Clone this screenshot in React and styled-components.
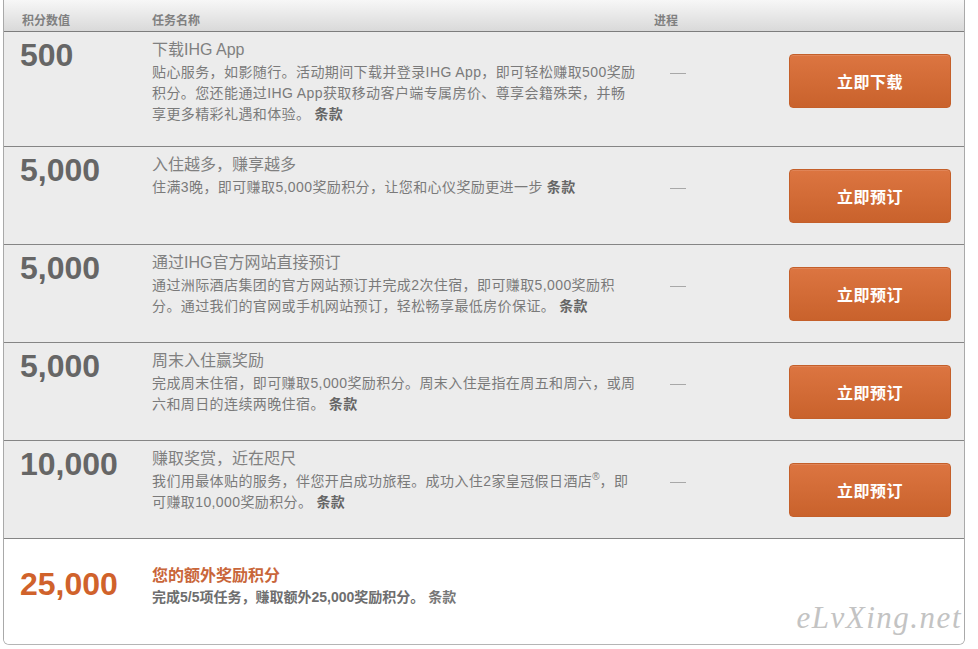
import React from "react";
import styled, { createGlobalStyle } from "styled-components";

const Global = createGlobalStyle`
  html, body { margin: 0; padding: 0; background: #fff; }
  body { font-family: "Liberation Sans", "Noto Sans CJK SC", sans-serif; }
`;

const COLS = "132px 502px 135px 162px";

const Table = styled.div`
  width: 962px;
  margin-left: 3px;
  box-sizing: border-box;
  border-left: 1px solid #a9a9a9;
  border-right: 1px solid #a9a9a9;
  border-bottom: 1px solid #b5b5b5;
  border-radius: 0 0 6px 6px;
  overflow: hidden;
`;

const Header = styled.div`
  display: grid;
  grid-template-columns: ${COLS};
  height: 32px;
  box-sizing: border-box;
  padding: 12px 13px 0 18px;
  background: linear-gradient(#f7f7f7, #d9d9d9);
  border-bottom: 1px solid #7d7d7d;
`;

const HeadCell = styled.div`
  font-size: 12px;
  line-height: 18px;
  font-weight: bold;
  color: #808080;
  margin-left: ${(p) => p.$shift || 0}px;
`;

const Row = styled.div`
  position: relative;
  display: grid;
  grid-template-columns: ${COLS};
  align-items: start;
  box-sizing: border-box;
  padding: ${(p) => (p.$bonus ? "26px 13px 0 16px" : "6px 13px 21px 16px")};
  min-height: ${(p) => (p.$bonus ? "105px" : "auto")};
  background: ${(p) => (p.$bonus ? "#ffffff" : "#ececec")};
  border-bottom: ${(p) => (p.$bonus ? "none" : "1px solid #858585")};
`;

const Points = styled.div`
  font-size: 32px;
  line-height: 32px;
  font-weight: bold;
  color: ${(p) => (p.$bonus ? "#d0622b" : "#666666")};
  padding-top: ${(p) => (p.$bonus ? "3px" : "1px")};
`;

const Task = styled.div`
  display: flex;
  flex-direction: column;
`;

const Title = styled.div`
  font-size: 16px;
  line-height: ${(p) => (p.$bonus ? "22px" : "24px")};
  font-weight: ${(p) => (p.$bonus ? "bold" : "normal")};
  color: ${(p) => (p.$bonus ? "#c9663a" : "#808080")};
`;

const Desc = styled.div`
  font-size: 14px;
  line-height: 21px;
  letter-spacing: ${(p) => (p.$bonus ? "0" : "0.4px")};
  font-weight: ${(p) => (p.$bonus ? "bold" : "normal")};
  color: ${(p) => (p.$bonus ? "#6e6e6e" : "#7a7a7a")};
`;

const Line = styled.span`
  display: block;
  white-space: nowrap;
`;

const Terms = styled.span`
  font-weight: bold;
  color: ${(p) => (p.$bonus ? "#777" : "#666")};
  margin-left: 4px;
`;

const Sup = styled.sup`
  font-size: 10px;
  line-height: 0;
  letter-spacing: 0;
`;

const Progress = styled.div`
  padding: 35px 0 0 16px;
`;

const Dash = styled.span`
  display: block;
  width: 16px;
  height: 1px;
  background: #a8a8a8;
`;

const Button = styled.button`
  margin-top: 16px;
  width: 162px;
  height: 54px;
  border: 1px solid #c45f2a;
  border-radius: 4px;
  background: linear-gradient(#dc7541, #c9622c);
  color: #fff;
  font-family: "Noto Sans CJK SC", sans-serif;
  font-size: 16px;
  font-weight: bold;
  letter-spacing: 0.5px;
  cursor: pointer;
  box-shadow: inset 0 1px 0 rgba(255, 255, 255, 0.12);
`;

const Watermark = styled.div`
  position: absolute;
  right: 2px;
  bottom: 8px;
  font-family: "Liberation Serif", "DejaVu Serif", serif;
  font-style: italic;
  font-size: 31px;
  letter-spacing: 1.5px;
  color: #b9b9b9;
  opacity: 0.85;
  pointer-events: none;
`;

const tasks = [
  {
    points: "500",
    title: "下载IHG App",
    lines: [
      "贴心服务，如影随行。活动期间下载并登录IHG App，即可轻松赚取500奖励",
      "积分。您还能通过IHG App获取移动客户端专属房价、尊享会籍殊荣，并畅",
      "享更多精彩礼遇和体验。",
    ],
    action: "立即下载",
  },
  {
    points: "5,000",
    title: "入住越多，赚享越多",
    lines: ["住满3晚，即可赚取5,000奖励积分，让您和心仪奖励更进一步"],
    action: "立即预订",
  },
  {
    points: "5,000",
    title: "通过IHG官方网站直接预订",
    lines: [
      "通过洲际酒店集团的官方网站预订并完成2次住宿，即可赚取5,000奖励积",
      "分。通过我们的官网或手机网站预订，轻松畅享最低房价保证。",
    ],
    action: "立即预订",
  },
  {
    points: "5,000",
    title: "周末入住赢奖励",
    lines: [
      "完成周末住宿，即可赚取5,000奖励积分。周末入住是指在周五和周六，或周",
      "六和周日的连续两晚住宿。",
    ],
    action: "立即预订",
  },
  {
    points: "10,000",
    title: "赚取奖赏，近在咫尺",
    lines: [
      <>
        我们用最体贴的服务，伴您开启成功旅程。成功入住2家皇冠假日酒店<Sup>®</Sup>，即
      </>,
      "可赚取10,000奖励积分。",
    ],
    action: "立即预订",
  },
];

export default function App() {
  return (
    <>
      <Global />
      <Table>
        <Header>
          <HeadCell>积分数值</HeadCell>
          <HeadCell $shift={-2}>任务名称</HeadCell>
          <HeadCell $shift={-2}>进程</HeadCell>
          <div />
        </Header>
        {tasks.map((t, i) => (
          <Row key={i}>
            <Points>{t.points}</Points>
            <Task>
              <Title>{t.title}</Title>
              <Desc>
                {t.lines.map((l, j) => (
                  <Line key={j}>
                    {l}
                    {j === t.lines.length - 1 && <Terms>条款</Terms>}
                  </Line>
                ))}
              </Desc>
            </Task>
            <Progress>
              <Dash />
            </Progress>
            <Button>{t.action}</Button>
          </Row>
        ))}
        <Row $bonus>
          <Points $bonus>25,000</Points>
          <Task>
            <Title $bonus>您的额外奖励积分</Title>
            <Desc $bonus>
              <Line>
                完成5/5项任务，赚取额外25,000奖励积分。
                <Terms $bonus>条款</Terms>
              </Line>
            </Desc>
          </Task>
          <div />
          <div />
          <Watermark>eLvXing.net</Watermark>
        </Row>
      </Table>
    </>
  );
}
